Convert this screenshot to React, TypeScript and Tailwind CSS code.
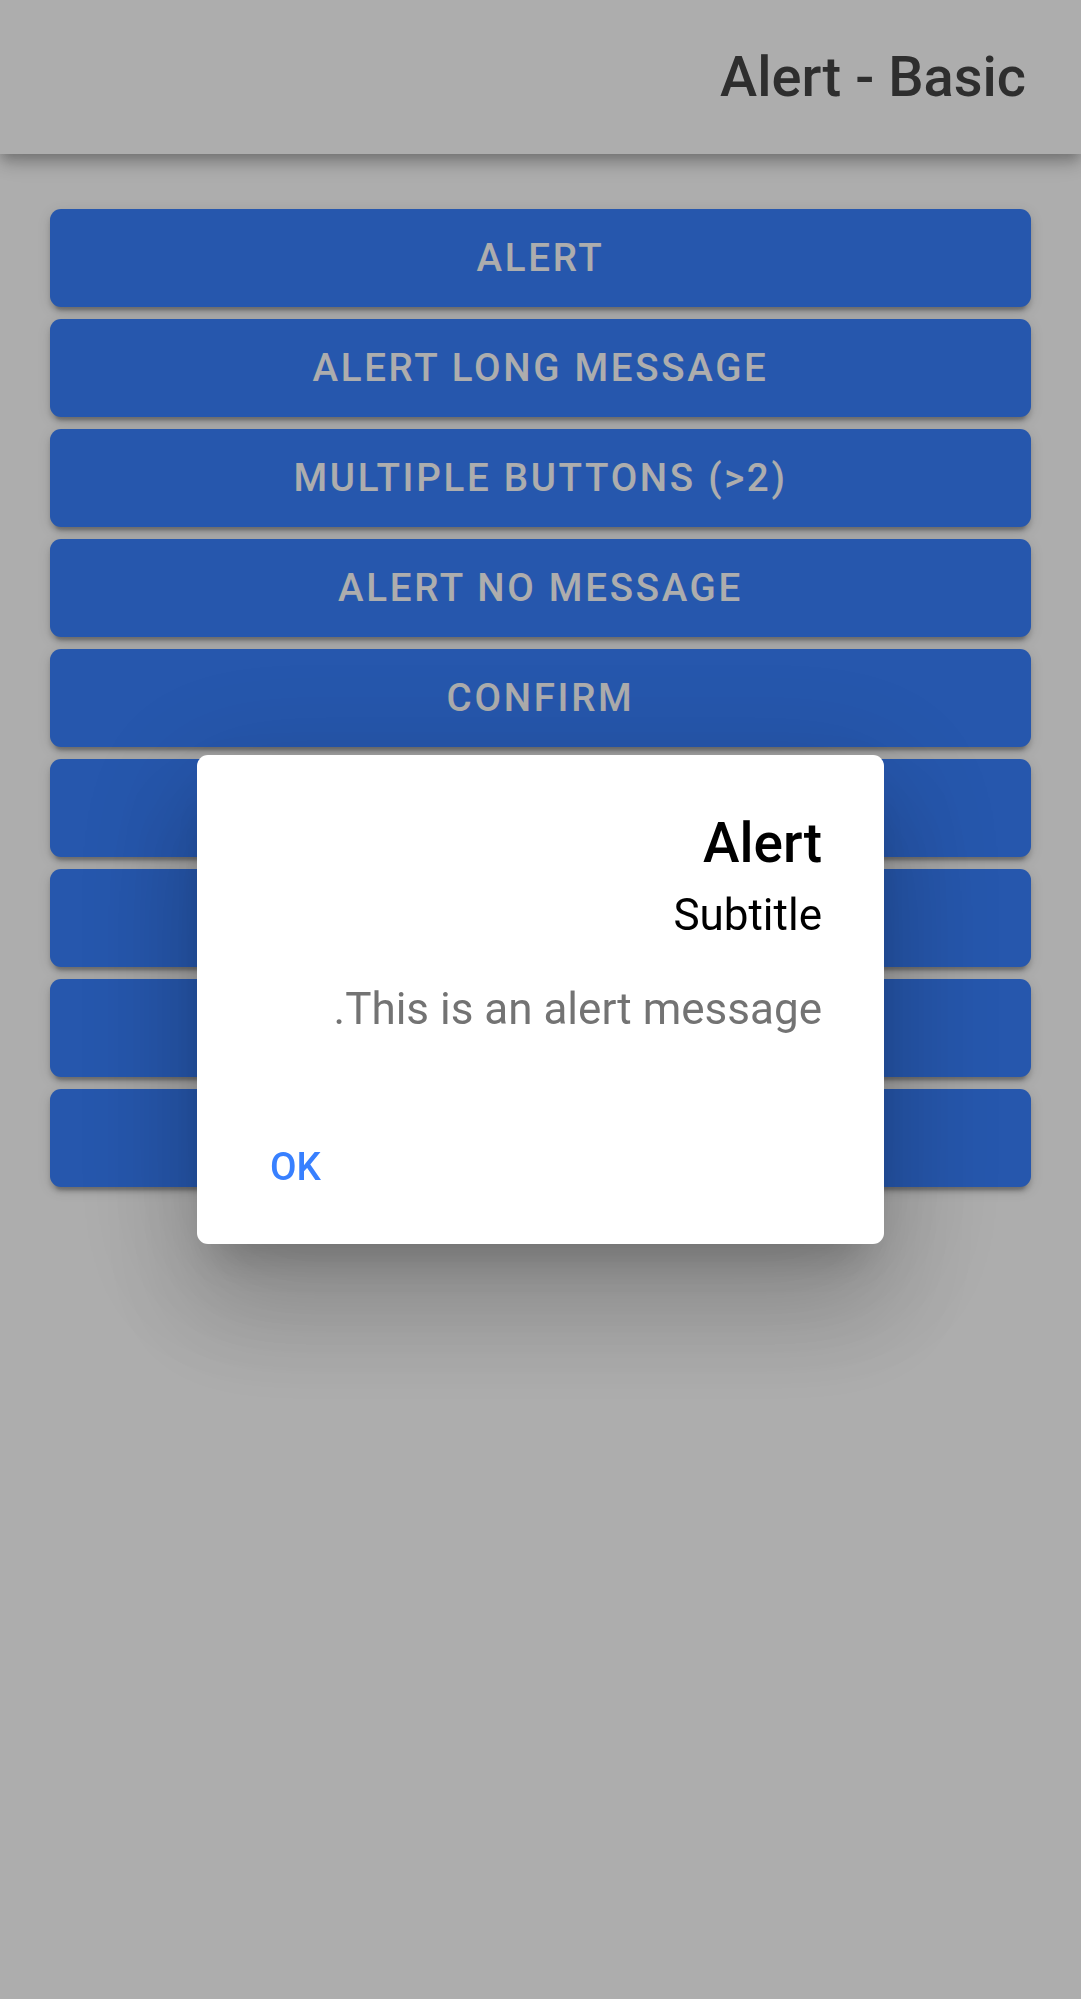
import React from "react";

const labels = [
  "Alert",
  "Alert Long Message",
  "Multiple Buttons (>2)",
  "Alert No Message",
  "Confirm",
  "Prompt",
  "Radio",
  "Checkbox",
  "Custom Class",
];

export default function App() {
  return (
    <div dir="rtl" className="relative min-h-[1999px] bg-white font-[Roboto,sans-serif]">
      <header className="relative z-10 flex h-[154px] items-center bg-white px-[55px] shadow-[0_5px_11px_-3px_rgba(0,0,0,0.2),0_11px_14px_0_rgba(0,0,0,0.14),0_3px_27px_0_rgba(0,0,0,0.12)]">
        <h1 className="text-[56px] font-medium leading-[64px] text-[#454545]">Alert - Basic</h1>
      </header>
      <main className="flex flex-col gap-[12px] px-[50px] pt-[55px]">
        {labels.map((l) => (
          <button
            key={l}
            className="flex h-[98px] w-full items-center justify-center rounded-[11px] bg-[#3880ff] text-[38.5px] font-medium uppercase leading-none tracking-[0.07em] text-white shadow-[0_8px_3px_-5px_rgba(0,0,0,0.2),0_5px_5px_0_rgba(0,0,0,0.14),0_3px_14px_0_rgba(0,0,0,0.12)]"
          >
            {l}
          </button>
        ))}
      </main>
      <div className="fixed inset-0 z-20 bg-black/[0.32]" />
      <div className="fixed inset-0 z-30 flex items-center justify-center">
        <div className="flex w-[687px] flex-col rounded-[11px] bg-white shadow-[0_30px_41px_-19px_rgba(0,0,0,0.2),0_66px_105px_8px_rgba(0,0,0,0.14),0_25px_127px_22px_rgba(0,0,0,0.12)]">
          <div className="flex flex-col px-[62px] pt-[54px]">
            <h2 className="text-[55px] font-medium leading-[68px] text-black">Alert</h2>
            <h3 className="mt-[12px] text-[44px] font-normal leading-[52px] text-black">Subtitle</h3>
          </div>
          <div className="mt-[42px] px-[62px] text-[44px] leading-[52px] text-[#737373]">
            This is an alert message.
          </div>
          <div className="mt-[107px] flex justify-end pb-[52px] pe-[73px]">
            <span className="text-[38.5px] font-medium uppercase leading-[50px] text-[#3880ff]">OK</span>
          </div>
        </div>
      </div>
    </div>
  );
}
